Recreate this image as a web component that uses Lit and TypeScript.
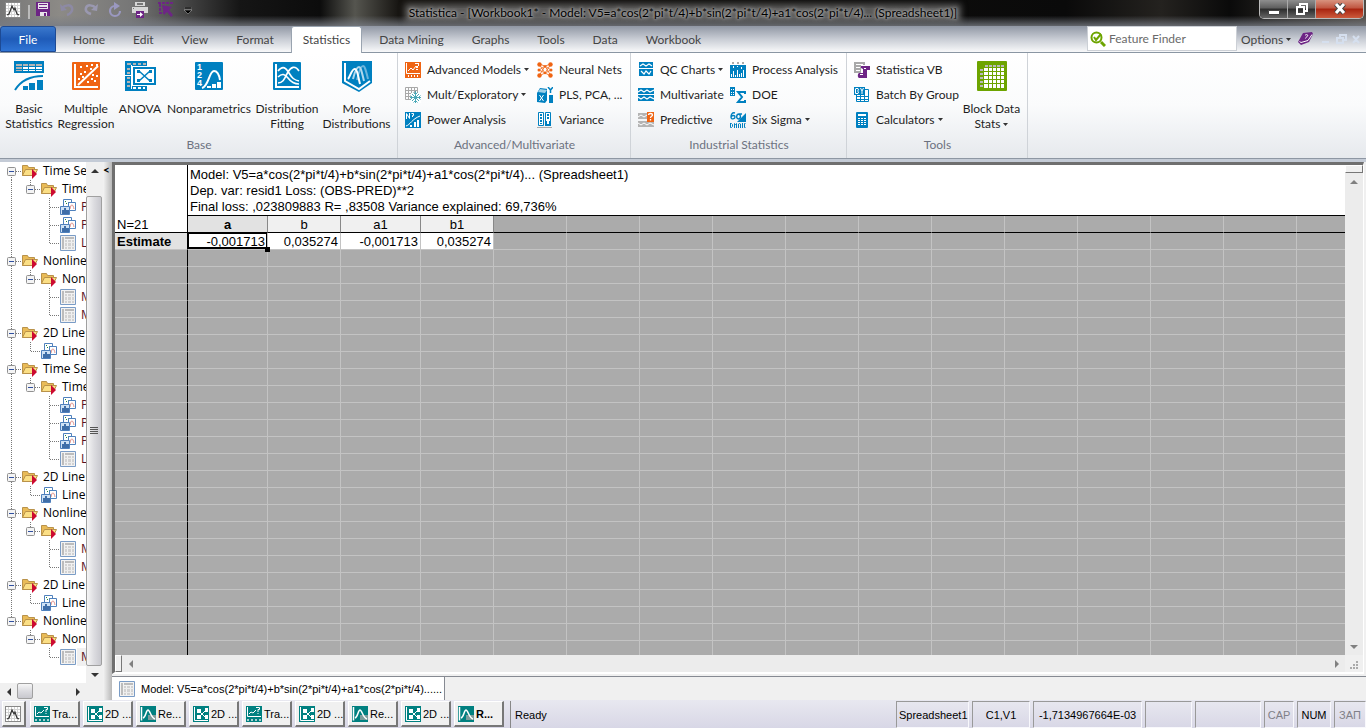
import { LitElement, html, css, svg, nothing, TemplateResult } from 'lit';
import { customElement, property } from 'lit/decorators.js';

interface TreeNode {
  label: string;
  icon: string;
  selected?: boolean;
  children?: TreeNode[];
}

const icon = (w: number, h: number, body: unknown) => html`
  <svg width=${w} height=${h} viewBox="0 0 ${w} ${h}" aria-hidden="true">${body}</svg>
`;

const BLUE = '#0080c0';
const ORANGE = '#ef6413';
const PURPLE = '#6d2585';
const TEAL = '#008080';
const GREEN = '#6da400';

const ICONS: Record<string, TemplateResult> = {
  basic: icon(30, 30, svg`
    <path fill=${BLUE} d="M0 0h30v12H0z"/>
    <path fill="#b5b5b5" d="M2 3h6v2H2zM9 3h5v2H9zM15 3h6v2h-6zM22 3h6v2h-6zM2 6h6v2H2zM2 9h6v1H2z"/>
    <path fill="#fff" d="M9 6h5v2H9zM15 6h6v2h-6zM22 6h6v2h-6zM9 9h5v1H9zM15 9h6v1h-6zM22 9h6v1h-6z"/>
    <path fill="none" stroke=${BLUE} stroke-width="2" d="M1 29C6 21 15 15 29 15"/>
    <path fill=${BLUE} d="M9 25h5v4H9zM15 22h6v7h-6zM23 19h6v10h-6z"/>`),
  regression: icon(28, 28, svg`
    <rect width="28" height="28" rx="1" fill=${ORANGE}/>
    <path fill="none" stroke="#fff" stroke-width="2" d="M3 2v23h23"/>
    <path fill="none" stroke="#fff" stroke-width="2" d="M6 23 26 4"/>
    <path fill="#fff" d="M8 4h2v2H8zM14 3h2v2h-2zM19 2h2v2h-2zM24 2h2v2h-2zM18 6h2v2h-2zM8 11h2v2H8zM12 9h2v2h-2zM6 16h2v2H6zM10 14h2v2h-2zM20 12h2v2h-2zM24 13h2v2h-2zM19 16h2v2h-2zM15 19h2v2h-2zM22 18h2v2h-2z"/>`),
  anova: icon(31, 30, svg`
    <path fill=${BLUE} d="M0 0h22v30H0z"/>
    <path fill="#b5b5b5" d="M2 2h4v2H2zM2 16h3v2H2zM2 20h3v2H2zM2 24h3v2H2zM2 7h3v2H2zM2 11h3v2H2zM8 2h3v2H8zM13 2h3v2h-3zM18 2h3v2h-3z"/>
    <path fill="#fff" d="M0 14h8v1H0zM6 4h1v24H6zM8 26h3v2H8zM13 26h3v2h-3zM18 26h2v2h-2z"/>
    <path fill="#fff" d="M7 5h24v20H7z"/>
    <path fill="none" stroke=${BLUE} stroke-width="2" d="M9 7h21v16H9z"/>
    <path stroke=${BLUE} stroke-width="1.5" d="m14 10 11 10M25 10 14 20"/>
    <path fill=${BLUE} d="M12 9h3v3h-3zM24 9h3v3h-3zM12 18h3v3h-3zM24 18h3v3h-3z"/>`),
  nonparam: icon(28, 28, svg`
    <rect width="28" height="28" rx="1" fill=${BLUE}/>
    <g fill="#fff" font-family="Liberation Sans, sans-serif" font-weight="bold" font-size="9">
      <text x="2" y="8">1</text><text x="2" y="16">2</text><text x="2" y="24">4</text>
    </g>
    <path fill="none" stroke="#fff" stroke-width="2" d="M7 26c7-2 7-17 12-17 3 0 5 3 6 9"/>
    <path fill="#fff" d="M12 24h4v2h-4zM17 22h4v4h-4zM22 20h4v6h-4z"/>`),
  distribution: icon(28, 28, svg`
    <rect width="28" height="28" rx="1" fill=${BLUE}/>
    <path fill="none" stroke="#fff" stroke-width="2" d="M3 2v23h23"/>
    <path fill="none" stroke="#fff" stroke-width="1.6" d="M5 9c5-6 8-3 11 2s5 7 10 8M5 21c6 0 7-6 10-11s7-7 11-1M5 15c4-4 7-3 10 1s6 6 11 6"/>`),
  shield: icon(30, 31, svg`
    <path fill=${BLUE} d="M0 0h30v22l-13 9L0 22z"/>
    <path fill="none" stroke="#fff" stroke-width="2" d="M3 2v18l14 8 11-8"/>
    <path fill="none" stroke="#6bb5dc" stroke-width="2" d="M15 19c2-9 4-14 6-14s3 5 5 13"/>
    <path fill="none" stroke="#b0d8ed" stroke-width="2" d="M11 18c2-8 4-12 6-12s3 6 5 14"/>
    <path fill="none" stroke="#fff" stroke-width="2" d="M6 18c2-2 4-11 7-10s3 8 5 15"/>`),
  block: icon(30, 30, svg`
    <rect width="30" height="30" rx="1" fill=${GREEN}/>
    <path fill="#fff" d="M7 7h20v20H7z"/>
    <path stroke=${GREEN} d="M11.500 7v20M15.500 7v20M19.500 7v20M23.500 7v20M7 10.500h20M7 14.500h20M7 18.500h20M7 22.500h20"/>
    <path fill="#b9b9b9" d="M8 4h3v2H8zM12 4h3v2h-3zM16 4h3v2h-3zM20 4h3v2h-3zM24 4h3v2h-3zM3 8h3v2H3zM3 12h3v2H3zM3 16h3v2H3zM3 20h3v2H3zM3 24h3v2H3z"/>`),
  advanced: icon(16, 16, svg`
    <path fill=${ORANGE} d="M0 0h16v16H0z"/>
    <path fill="none" stroke="#fff" d="M1.500 1v10.500H15M3 9l3-3 2 2 3-4"/>
    <path fill="#fff" d="M10 1h4v1h-4zM13 2h1v2h-1zM11 4h2v2h-2zM11 7h2v1h-2z"/>
    <path fill="#fff" d="M3 13h1v2H3zM6 13h1v2H6zM9 13h1v2H9zM12 13h1v2h-1z"/>`),
  exploratory: icon(16, 16, svg`
    <path fill="none" stroke="#a8a8a8" d="M.5.5h12v12H.5zM.5 3.500h12M.5 6.500h12M.5 9.500h12M3.500.5v12M6.500.5v12M9.500.5v6"/>
    <path fill="#fff" d="M6 6h10v10H6z"/>
    <path fill="none" stroke="#4aa9b8" d="M10.500 4v12M5 10.500h11M7 7l7 7M14 7l-7 7M8.500 5.500l2 2 2-2M8.500 15.500l2-2 2 2M5.500 8.500l2 2-2 2M15.500 8.500l-2 2 2 2"/>`),
  power: icon(16, 16, svg`
    <path fill=${BLUE} d="M0 0h16v16H0z"/>
    <path fill="none" stroke="#fff" d="M1.500 7V1.500l3 5V1M6.500 1.500h2v2h-1V5M1 14c4-1 6-7 14-10"/>
    <path fill="#fff" d="M5 13h2v2H5zM9 10h2v5H9zM12 8h2v7h-2z"/>`),
  neural: icon(16, 16, svg`
    <path stroke=${ORANGE} stroke-width=".8" fill="none" d="m2 2 6 2 6-2M2 2l6 9 6-9M2 8l6-4 6 4M2 8l6 3 6-3M2 14l6-10 6 10M2 14l6-3 6 3"/>
    <g fill=${ORANGE}><circle cx="2.500" cy="2.500" r="2.200"/><circle cx="2" cy="8" r="1.500"/><circle cx="2.500" cy="13.500" r="2.200"/><circle cx="13.500" cy="2.500" r="2.200"/><circle cx="14" cy="8" r="1.500"/><circle cx="13.500" cy="13.500" r="2.200"/><circle cx="8" cy="4.500" r="1.200"/><circle cx="8" cy="11" r="1.200"/></g>`),
  pls: icon(16, 16, svg`
    <path fill=${BLUE} d="m0 6 3-5 8 1v10l-3 4-8-1z"/>
    <path fill="#9fd0e8" d="m1 5 2-3 7 1-2 3z"/>
    <path fill="none" stroke="#fff" d="m2.500 8 4 6M6.500 8l-4 6"/>
    <path fill="#fff" d="M10 0h2v16h-2z"/>
    <path fill="none" stroke=${BLUE} stroke-width="1.500" d="m11 0 2.500 3L16 0M13.500 3v3"/>
    <path fill=${BLUE} d="M12 8h4v8h-4z"/>`),
  variance: icon(16, 16, svg`
    <path fill="#fff" stroke=${BLUE} d="M1.500.5h5v13h-5zM8.500.5h5v13h-5z"/>
    <path fill=${BLUE} d="M3 2h2v2H3zM3 5h2v2H3zM3 8h2v2H3zM3 11h2v1H3zM10 2h2v2h-2zM10 5h2v2h-2zM8 9h6v5H8z"/>
    <path fill="#fff" d="M10 9h2v3h-2z"/>
    <path fill="#aaa" d="M0 15h15v1H0z"/>`),
  qc: icon(16, 16, svg`
    <path fill=${BLUE} d="M1 0h14v6H1zM1 7h14v7H1z"/>
    <path fill="none" stroke="#fff" stroke-width="1.200" d="m2 4 3-2 3 2 3-2 3 2M3 9l3 3 2-3 3 3 2-3"/>`),
  multivariate: icon(16, 16, svg`
    <path fill=${BLUE} d="M0 1h16v6H0zM0 8h16v6H0z"/>
    <path fill="none" stroke="#fff" stroke-width="1.200" d="m0 5 3-2 3 2 3-2 3 2 4-2M0 10l3 2 3-2 3 2 3-2 4 2"/>`),
  predictive: icon(16, 16, svg`
    <path fill="#b4b4b4" d="M0 1h9v6H0zM0 9h16v6H0z"/>
    <path fill="none" stroke="#fff" d="m0 5 3-2 3 2 3-2M0 11l3 2 3-2 3 2 3-2 4 2"/>
    <path fill=${ORANGE} d="M9 0h7v10H9z"/>
    <path fill="none" stroke="#fff" stroke-width="1.300" d="M10.500 3c0-2 4-2 4 0 0 1.500-2 1-2 3M12.500 7v1.500"/>`),
  process: icon(16, 16, svg`
    <path fill="#aaa" d="M2 0h2v2H2zM7 0h2v2H7zM12 0h2v2h-2z"/>
    <path fill=${BLUE} d="M0 3h16v13H0z"/>
    <path stroke="#fff" d="M3.500 4v2M3.500 9v6M7.500 4v1M7.500 8v7M11.500 5v2M11.500 11v4M1.500 12v3M5.500 13v2M9.500 12v3M13.500 8v7"/>`),
  doe: icon(16, 16, svg`
    <path fill=${BLUE} d="M0 0h5v9H0z"/>
    <path fill="#fff" d="M1 2h1v1H1zM3 2h1v1H3zM1 5h1v1H1zM3 5h1v1H3zM1 7h1v1H1zM3 7h1v1H3z"/>
    <path fill="none" stroke=${BLUE} stroke-width="2" d="M15 7V5H8l4 5-4 5h7v-2"/>`),
  sigma: icon(16, 16, svg`
    <path fill="none" stroke=${BLUE} stroke-width="1.400" d="M5 1C2 0 1 3 1 5c0 3 4 2 4 0S2 3 1 5M12 2H9C6 2 6 7 8.500 7S11 3 9 2"/>
    <path fill=${BLUE} d="M16 1v9H7z"/>
    <path fill="none" stroke=${BLUE} d="M.5 11v4.500h1l1-1v-2l-1-1h-1M4.500 16v-4.500l1 1 1-1V16M8.500 16v-4l1-.5 1 .5v4M12.500 11v5M15.500 11.500h-1v4h1"/>`),
  vb: icon(16, 16, svg`
    <path fill="#a9a9a9" d="M0 0h11v3H7v8H0z"/><path fill="#fff" d="M2 2h7v1H2zM2 5h4v1H2zM2 8h4v1H2z"/>
    <path fill=${PURPLE} d="M7 4h9v4h-3v8H5c-2-1-1-5 0-5h4V7L7 6z"/><path fill="#fff" d="M6 12h3v1H6zM10 6h2v1h-2z"/>`),
  batch: icon(16, 16, svg`
    <path fill="#fff" stroke=${BLUE} d="M2.500 2.500h12v12h-12zM2.500 9.500h12M2.500 12.500h12M6.500 8v7M10.500 2v13"/>
    <path fill=${BLUE} d="M0 0h11v8H0z"/>
    <path fill="none" stroke="#fff" d="M1.500 2v4.500H4L4.500 5l-1-1 1-1L4 1.500H1.500M6.500 1l1.500 3 1.500-3M8 4v3"/>`),
  calculator: icon(16, 16, svg`
    <rect x="2" width="12" height="16" rx="1" fill=${BLUE}/>
    <path fill="#fff" d="M4 2h8v2H4z"/>
    <path stroke="#fff" stroke-dasharray="2 1" d="M4 6.500h8M4 8.500h8M4 10.500h8M4 12.500h8"/>`),
  chart: icon(16, 16, svg`
    <rect x=".5" y=".5" width="15" height="15" fill="#fff" stroke="#888"/>
    <path stroke="#d4d4d4" d="M3.500 1v14M6.500 1v14M9.500 1v14M12.500 1v14M1 3.500h14M1 6.500h14M1 9.500h14M1 12.500h14"/>
    <path fill="none" stroke="#333" stroke-width="1.200" d="m2 13 2-1 3-8 2 4 1-2 2 6 2 1"/>`),
  save: icon(14, 14, svg`
    <path fill=${PURPLE} d="M0 0h14v14H0z"/><path fill="#e8e4ea" d="M2 1h10v6H2zM4 10h7v4H4z"/>
    <path fill=${PURPLE} d="M3 2h8v1H3zM3 5h8v1H3zM8 11h2v3H8z"/>`),
  undo: icon(14, 14, svg`<path fill="none" stroke="#8d8aa4" stroke-width="2.500" d="M2 6c3-3 9-4 10 0 1 3-2 6-5 7"/><path fill="#8d8aa4" d="m0 2 1 7 6-1z"/>`),
  redo: icon(14, 14, svg`<path fill="none" stroke="#9a98b0" stroke-width="2.500" d="M12 6C9 3 3 2 2 6c-1 3 2 5 5 6"/><path fill="#9a98b0" d="m14 2-1 7-6-1z"/>`),
  refresh: icon(14, 16, svg`<path fill="none" stroke="#9a98c0" stroke-width="2.200" d="M7 4a5 5 0 1 0 5 5"/><path fill="#9a98c0" d="m6 0 6 4-6 4z"/>`),
  print: icon(16, 16, svg`
    <path fill="#d6d6d6" d="M0 5h16v6H0zM3 0h10v4H3z"/><path fill="#777" d="M5 1h6v2H5zM1 6h1v1H1z"/>
    <path fill=${PURPLE} d="M4 9h8v7H4z"/><path fill="#fff" d="M5 12h3v-2l3 2.500L8 15v-2H5z"/>`),
  select: icon(16, 16, svg`
    <path fill="none" stroke=${PURPLE} stroke-width="2" stroke-dasharray="3 1" d="M0 1h16M2 2v9h4"/>
    <path fill=${PURPLE} d="m4 3 10 2-3 3 4 5-2 2-4-5-3 3z"/>`),
  search: icon(16, 16, svg`
    <circle cx="6.500" cy="6.500" r="5" fill="none" stroke=${GREEN} stroke-width="2"/>
    <path stroke=${GREEN} stroke-width="3" d="m11 11 4 4"/>
    <path fill="none" stroke=${GREEN} stroke-width="2" d="m4 6 2 3 5-6"/>`),
  book: icon(15, 14, svg`
    <path fill=${PURPLE} d="m5 1 9-1 1 2-4 8-8 3-3-3z"/>
    <path fill="none" stroke="#fff" d="m1.500 9.500 1.500 1 7-2 4-6"/>
    <path fill="none" stroke="#fff" d="M7 3.500c1-1.500 3.500-1 2.500.5S8 5 7.500 6.500"/>`),
  folder: icon(16, 16, svg`
    <path fill="#e9bb57" stroke="#b9924a" d="M.5 12.500v-10h5l1 2h6v8z"/>
    <path fill="#fbdf85" stroke="#b9924a" d="m.5 12.500 3-6h12l-3 6z"/>
    <path fill="#cc0a30" d="m10 6 5 5-5 5z"/>`),
  graph: icon(16, 16, svg`
    <path fill="#fff" stroke="#4f81bd" d="M3.500.5h8v7h-8z"/>
    <path fill="#2b8a3c" d="M5 2h1v1H5zM8 3h1v1H8zM6 4h1v1H6z"/>
    <path fill="#fff" stroke="#4f81bd" d="M8.500 3.500h7v8h-7z"/>
    <path fill="none" stroke="#e0908a" d="M10 10c1-6 3-5 4 0"/>
    <path fill="#cfe2f5" stroke="#4f81bd" d="M.5 7.500h9v8h-9z"/>
    <path fill="#3f6ea8" d="M2 11h2v4H2zM4 9h2v6H4zM6 11h3v4H6z"/>`),
  sheet: icon(16, 16, svg`
    <path fill="#f2f2f2" stroke="#7a9cc6" d="M.5.5h15v15H.5z"/>
    <path fill="#bcbcbc" d="M2 2h2v12H2zM5 2h9v2H5z"/><path fill="#d2d2d2" d="M5 5h2v9H5zM8 5h3v9H8zM12 5h2v9h-2z"/>
    <path stroke="#ececec" d="M5 7.500h10M5 11.500h10"/>`),
  winTransform: icon(16, 16, svg`
    <path fill=${TEAL} d="M0 0h16v16H0z"/>
    <path fill="none" stroke="#fff" d="M1.500 1v9.500H15M3 8l2-2 2 1 3-3M10 1.500h3.500v2h-1.500V6M12 7v1"/>
    <path fill="#a8d0d0" d="M1 13h2v2H1zM5 13h2v2H5zM9 13h2v2H9zM13 13h2v2h-2z"/>`),
  win2d: icon(16, 16, svg`
    <path fill=${TEAL} d="M0 0h16v16H0z"/>
    <path fill="none" stroke="#fff" d="M1.500 1v13.500H15M6 5l7 7M6 11l7-7"/>
    <path fill="#fff" d="M4 3h4v4H4zM4 9h4v4H4zM12 2h3v4h-3zM12 9h3v4h-3z"/>`),
  winResults: icon(16, 16, svg`
    <path fill=${TEAL} d="M0 0h16v16H0z"/><path fill="#7d9c9c" d="M8 9h8v5H8z"/>
    <path fill="none" stroke="#fff" stroke-width="1.500" d="M1.500 1v13.500M3 12c3-1 3-8 5-8s3 8 7 9"/>`),
};

const BIG_BASE = [
  ['basic', 'Basic', 'Statistics'],
  ['regression', 'Multiple', 'Regression'],
  ['anova', 'ANOVA', ''],
  ['nonparam', 'Nonparametrics', ''],
  ['distribution', 'Distribution', 'Fitting'],
  ['shield', 'More', 'Distributions'],
];

const ADVANCED: [string, string, boolean?][] = [
  ['advanced', 'Advanced Models', true], ['neural', 'Neural Nets'],
  ['exploratory', 'Mult/Exploratory', true], ['pls', 'PLS, PCA, ...'],
  ['power', 'Power Analysis'], ['variance', 'Variance'],
];

const INDUSTRIAL: [string, string, boolean?][] = [
  ['qc', 'QC Charts', true], ['process', 'Process Analysis'],
  ['multivariate', 'Multivariate'], ['doe', 'DOE'],
  ['predictive', 'Predictive'], ['sigma', 'Six Sigma', true],
];

const TOOLS: [string, string, boolean?][] = [
  ['vb', 'Statistica VB'],
  ['batch', 'Batch By Group'],
  ['calculator', 'Calculators', true],
];

const TABS = ['Home', 'Edit', 'View', 'Format', 'Statistics', 'Data Mining', 'Graphs', 'Tools', 'Data', 'Workbook'];

const leaf = (label: string, iconName: string, selected = false): TreeNode => ({ label, icon: iconName, selected });
const folder = (label: string, children: TreeNode[]): TreeNode => ({ label, icon: 'folder', children });

const TREE: TreeNode[] = [
  folder('Time Series', [folder('Time', [leaf('P', 'graph'), leaf('P', 'graph'), leaf('L', 'sheet')])]),
  folder('Nonlinear', [folder('Nonlinear', [leaf('M', 'sheet'), leaf('M', 'sheet')])]),
  folder('2D Line', [leaf('Line', 'graph')]),
  folder('Time Series', [folder('Time', [leaf('P', 'graph'), leaf('P', 'graph'), leaf('P', 'graph'), leaf('L', 'sheet')])]),
  folder('2D Line', [leaf('Line', 'graph')]),
  folder('Nonlinear', [folder('Nonlinear', [leaf('M', 'sheet'), leaf('M', 'sheet')])]),
  folder('2D Line', [leaf('Line', 'graph')]),
  folder('Nonlinear', [folder('Nonlinear', [leaf('M', 'sheet', true)])]),
];

const MODEL = 'Model: V5=a*cos(2*pi*t/4)+b*sin(2*pi*t/4)+a1*cos(2*pi*t/4)...';

const arrow = (dir: string, dim = false) => {
  const d: Record<string, string> = {
    up: 'M0 6 4 2l4 4z', down: 'M0 2h8L4 6z', left: 'M6 0v8L2 4z', right: 'M2 0v8l4-4z',
  };
  return icon(8, 8, svg`<path fill=${dim ? '#808080' : '#333'} d=${d[dir]}/>`);
};

const caret = html`<svg class="caret" width="5" height="3" viewBox="0 0 5 3" aria-hidden="true"><path fill="#333" d="M0 0h5L2.500 3z"/></svg>`;

@customElement('workbook-tree')
export class WorkbookTree extends LitElement {
  @property({ attribute: false }) nodes: TreeNode[] = [];

  static styles = css`
    :host {
      display: block;
      overflow: hidden;
      background: #fff;
      font: 12px/18px 'Open Sans', sans-serif;
      color: #000;
    }

    .row {
      display: flex;
      height: 18px;
      padding-left: 2px;
      white-space: nowrap;
    }

    .row > svg {
      flex: none;
    }

    .node {
      margin: 1px 1px 0;
    }

    .label {
      padding: 0 4px;
      color: #000;
      text-decoration: none;
    }

    .label.leaf {
      color: #5a1020;
    }

    .label.selected {
      background: #f0f0f0;
    }
  `;

  private gutter(kind: string, expander: boolean, first: boolean) {
    const top = first ? 9 : 0;
    const bottom = kind === 'last' ? 9 : 18;
    return html`<svg width="19" height="18" viewBox="0 0 19 18" aria-hidden="true">
      ${kind !== 'blank' ? svg`<path stroke="#777" stroke-dasharray="1 1" d="M9.500 ${top}V${bottom}"/>` : nothing}
      ${kind === 'mid' || kind === 'last' ? svg`<path stroke="#777" stroke-dasharray="1 1" d="M10 9.500h9"/>` : nothing}
      ${expander ? svg`<rect x="5.500" y="5.500" width="8" height="8" rx="1" fill="#f4f4f4" stroke="#919191"/><path stroke="#3050a0" d="M7 9.500h5"/>` : nothing}
    </svg>`;
  }

  private rows(nodes: TreeNode[], trail: string[]): TemplateResult[] {
    return nodes.map((node, i) => {
      const last = i === nodes.length - 1;
      const first = i === 0 && trail.length === 0;
      return html`
        <div class="row" role="treeitem">
          ${trail.map((kind) => this.gutter(kind, false, false))}
          ${this.gutter(last ? 'last' : 'mid', !!node.children, first)}
          <span class="node">${ICONS[node.icon]}</span>
          <a href="#" class="label ${node.children || node.label === 'Line' ? '' : 'leaf'} ${node.selected ? 'selected' : ''}">${node.label}</a>
        </div>
        ${node.children ? this.rows(node.children, [...trail, last ? 'blank' : 'line']) : nothing}
      `;
    });
  }

  render() {
    return html`<div role="tree">${this.rows(this.nodes, [])}</div>`;
  }
}

@customElement('result-sheet')
export class ResultSheet extends LitElement {
  static styles = css`
    :host {
      display: block;
      overflow: hidden;
      background: #ababab;
      font: 13px/16px 'Liberation Sans', Arial, sans-serif;
      color: #000;
    }

    table {
      table-layout: fixed;
      border-collapse: separate;
      border-spacing: 0;
      width: 0;
    }

    th,
    td {
      box-sizing: border-box;
      height: 17px;
      padding: 2px 2px 0;
      border-right: 1px solid #c3c3c3;
      border-bottom: 1px solid #c3c3c3;
      font-weight: normal;
      line-height: 14px;
      white-space: nowrap;
    }

    .narrow {
      width: 73px;
    }

    .wide {
      width: 80px;
    }

    .corner {
      border-right-color: #000;
      border-bottom-color: #000;
      background: #fff;
      text-align: left;
      vertical-align: bottom;
    }

    .title {
      height: 51px;
      border-bottom-color: #000;
      background: #fff;
      line-height: 16px;
      text-align: left;
      vertical-align: top;
      white-space: pre-line;
    }

    .name {
      border-right-color: #888;
      border-bottom-color: #000;
      background: #f0f0f0;
    }

    .name.current {
      background: #e2e2e2;
      font-weight: bold;
    }

    .gap {
      border-bottom-color: #000;
    }

    .case {
      border-right-color: #000;
      text-align: left;
    }

    .case.filled {
      background: #e2e2e2;
      font-weight: bold;
    }

    .value {
      background: #fff;
      text-align: right;
    }

    .value.current {
      position: relative;
      box-shadow: inset 0 0 0 1px #000, inset 0 -2px #000;
    }

    .value.current::after {
      content: '';
      position: absolute;
      right: -3px;
      bottom: -3px;
      width: 5px;
      height: 5px;
      background: #000;
    }
  `;

  render() {
    const names = ['a', 'b', 'a1', 'b1'];
    const values = ['-0,001713', '0,035274', '-0,001713', '0,035274'];
    const blanks = Array.from({ length: 16 });
    const emptyRows = Array.from({ length: 40 });
    return html`
      <table>
        <colgroup>
          <col class="narrow" /><col class="wide" /><col class="narrow" /><col class="wide" /><col class="narrow" />
          ${blanks.map(() => html`<col class="narrow" />`)}
        </colgroup>
        <thead>
          <tr>
            <th class="corner" rowspan="2">N=21</th>
            <th class="title" colspan="20">${MODEL} (Spreadsheet1)
Dep. var: resid1 Loss: (OBS-PRED)**2
Final loss: ,023809883 R= ,83508 Variance explained: 69,736%</th>
          </tr>
          <tr>
            ${names.map((n, i) => html`<th class="name ${i === 0 ? 'current' : ''}" scope="col">${n}</th>`)}
            ${blanks.map(() => html`<td class="gap"></td>`)}
          </tr>
        </thead>
        <tbody>
          <tr>
            <th class="case filled" scope="row">Estimate</th>
            ${values.map((v, i) => html`<td class="value ${i === 0 ? 'current' : ''}">${v}</td>`)}
            ${blanks.map(() => html`<td></td>`)}
          </tr>
          ${emptyRows.map(() => html`
            <tr><td class="case"></td>${names.map(() => html`<td></td>`)}${blanks.map(() => html`<td></td>`)}</tr>
          `)}
        </tbody>
      </table>
    `;
  }
}

@customElement('app-root')
export class AppRoot extends LitElement {
  static styles = css`
    :host {
      display: flex;
      flex-direction: column;
      height: 100vh;
      overflow: hidden;
      background: #f0f0f0;
      color: #1e1e1e;
      font: 12px/15px Lato, 'Open Sans', sans-serif;
    }

    * {
      box-sizing: border-box;
    }

    button {
      display: flex;
      align-items: center;
      padding: 0;
      border: 0;
      background: none;
      color: inherit;
      font: inherit;
      white-space: nowrap;
    }

    svg {
      display: block;
      flex: none;
    }

    .caret {
      display: inline-block;
      margin-left: 3px;
      vertical-align: middle;
    }

    .titlebar {
      display: grid;
      grid-template-columns: 1fr auto 1fr;
      flex: none;
      height: 26px;
      background:
        linear-gradient(180deg, transparent 60%, rgba(120, 124, 132, 0.8)),
        linear-gradient(90deg, #777 0, #8c8a86 60px, #777 130px, #4a4a4a 180px, #151515 240px, #0c0c0c 320px, #55554f 355px, #151310 400px, #0a0a0a 78%, #24221f 85%, #0a0a0a 90%, #504b45 100%);
    }

    .quick {
      display: flex;
      align-items: flex-start;
      gap: 10px;
      padding: 2px 5px;
    }

    .quick .bar {
      width: 2px;
      height: 14px;
      margin: 3px -4px 0 -3px;
      background: #bbb;
    }

    .quick .more {
      margin-top: 5px;
    }

    .caption {
      align-self: center;
      margin: 0;
      background: rgba(140, 140, 140, 0.6);
      box-shadow: 0 0 6px 4px rgba(140, 140, 140, 0.6);
      color: #000;
      font-size: 12px;
      font-weight: normal;
      line-height: 10px;
      text-shadow: 0 0 3px #ccc, 0 0 5px #bbb;
      white-space: nowrap;
    }

    .window {
      display: flex;
      justify-self: end;
      height: 19px;
      margin-right: 2px;
      border: 1px solid #bbb;
      border-top: 0;
      border-radius: 0 0 5px 5px;
      overflow: hidden;
    }

    .window button {
      justify-content: center;
      width: 28px;
      border-right: 1px solid #aaa;
      background: linear-gradient(#8e8e8e, #5d5d5d 45%, #2c2c2c 50%, #666);
    }

    .window .close {
      width: 47px;
      border: 0;
      background: linear-gradient(#d8937f, #c05540 45%, #a82410 50%, #cc5a3c);
    }

    .tabs {
      display: flex;
      flex: none;
      height: 27px;
      border-bottom: 1px solid #8a96a3;
      background: linear-gradient(#9097a4, #c8ccd4 50%, #f8f9fa);
      color: #444;
    }

    .tabs .file {
      justify-content: center;
      width: 56px;
      height: 26px;
      border: 1px solid #1d4a94;
      border-radius: 3px 3px 0 0;
      background: linear-gradient(#3a78cc, #1f5bb8 50%, #2f74d4);
      color: #fff;
    }

    .tabs nav {
      display: flex;
      padding-left: 3px;
    }

    .tabs a {
      padding: 6px 14px;
      color: inherit;
      text-decoration: none;
      white-space: nowrap;
    }

    .tabs a.active {
      height: 27px;
      margin: 0 3px;
      padding: 5px 11px;
      border: 1px solid #9aa4b0;
      border-bottom: 0;
      border-radius: 3px 3px 0 0;
      background: #fff;
    }

    .finder {
      display: flex;
      align-items: center;
      gap: 3px;
      width: 150px;
      height: 25px;
      margin-left: auto;
      padding: 0 2px;
      border: 1px solid #ccd0d6;
      background: #fff;
    }

    .finder input {
      flex: 1;
      min-width: 0;
      padding: 0;
      border: 0;
      outline: 0;
      background: none;
      font: inherit;
    }

    .finder input::placeholder {
      color: #6a6a6a;
      opacity: 1;
    }

    .options {
      display: flex;
      align-items: center;
      gap: 7px;
      width: 129px;
      padding-left: 4px;
    }

    .ribbon {
      display: flex;
      flex: none;
      height: 106px;
      border-bottom: 1px solid #8e97a3;
      background: linear-gradient(#fff, #fafbfc 50%, #e6e9ed);
    }

    .group {
      display: flex;
      flex-direction: column;
      justify-content: space-between;
      padding: 4px 6px 5px 7px;
      border-right: 1px solid #cfd3d8;
    }

    .group h2 {
      margin: 0;
      color: #6c7280;
      font-size: 12px;
      font-weight: normal;
      line-height: 16px;
      text-align: center;
    }

    .bigs {
      display: grid;
      grid-template-columns: 58px 56px 52px 86px 70px 69px;
      margin-left: -7px;
    }

    .big {
      flex-direction: column;
      padding-top: 3px;
      text-align: center;
    }

    .big .pic {
      display: flex;
      align-items: center;
      height: 32px;
      margin-bottom: 9px;
    }

    .big .text {
      height: 30px;
    }

    .pairs {
      display: grid;
      grid-auto-rows: 25px;
    }

    .advanced {
      grid-template-columns: 132px 87px;
    }

    .industrial {
      grid-template-columns: 92px 110px;
    }

    .tools {
      display: grid;
      grid-template-columns: 108px 59px;
    }

    .small svg:first-child {
      margin-right: 6px;
    }

    .body {
      display: flex;
      flex: 1;
      min-height: 0;
      border-top: 3px solid #c4cbd6;
    }

    .side {
      display: grid;
      grid-template-columns: 86px 17px;
      grid-template-rows: minmax(0, 1fr) 17px;
      flex: none;
    }

    .track {
      display: flex;
      background: #f0f0f0;
    }

    .track.v {
      flex-direction: column;
    }

    .track button {
      justify-content: center;
      flex: none;
      width: 17px;
      height: 17px;
    }

    .track .thumb {
      display: flex;
      align-items: center;
      justify-content: center;
      border: 1px solid #a0a0a0;
      border-radius: 2px;
      background: linear-gradient(90deg, #f6f6f6, #dcdce0 50%, #c8c8ce);
    }

    .track.v .thumb {
      flex: 1;
      width: 16px;
      margin-top: 17px;
    }

    .track.h .thumb {
      width: 16px;
      height: 16px;
      background: linear-gradient(#f6f6f6, #dcdce0 50%, #c8c8ce);
    }

    .track .room {
      flex: 1;
    }

    .splitter {
      flex: none;
      align-items: flex-start;
      width: 9px;
      background: linear-gradient(90deg, #f4f4f4, #b8b8b8);
      color: #000;
      font-weight: bold;
      font-size: 12px;
    }

    .doc {
      display: flex;
      flex-direction: column;
      flex: 1;
      min-width: 0;
    }

    .pane {
      display: grid;
      grid-template-columns: minmax(0, 1fr) 18px;
      grid-template-rows: minmax(0, 1fr) 17px;
      flex: 1;
      min-height: 0;
      margin: 0 2px 2px 0;
      border: 3px solid #6f6f6f;
      border-right: 1px solid #fff;
      border-bottom: 2px solid #fff;
    }

    .pane .track {
      background: #ececec;
    }

    .grip {
      border: 1px solid #777;
      border-top-color: #fff;
      border-left-color: #fff;
      background: #f0f0f0;
    }

    .track.v .grip {
      height: 8px;
    }

    .track.h .grip {
      width: 7px;
    }

    .corner {
      padding: 6px 4px;
      background: #f0f0f0;
    }

    .sheets {
      display: flex;
      flex: none;
      height: 24px;
      border-top: 1px solid #868a92;
      font: 11px/16px 'Liberation Sans', Arial, sans-serif;
      color: #000;
    }

    .sheets button {
      gap: 6px;
      padding: 0 2px 0 7px;
      border-right: 1px solid #868a92;
      background: #fff;
    }

    .status {
      display: flex;
      flex: none;
      gap: 3px;
      height: 28px;
      padding: 1px 0 0 2px;
      background: linear-gradient(#e8e8f0, #d8d7e6);
      color: #000;
      font: 11px/16px 'Liberation Sans', Arial, sans-serif;
    }

    .status button {
      gap: 2px;
      width: 50px;
      height: 26px;
      padding-left: 3px;
      border: 1px solid #fff;
      border-right: 2px solid #777;
      border-bottom: 2px solid #777;
      background: #f0f0f0;
    }

    .status .menu {
      width: 24px;
      margin-right: 1px;
      padding-left: 2px;
    }

    .status .bold {
      font-weight: bold;
    }

    .status .ready {
      flex: 1;
      margin-left: 3px;
      padding: 6px 4px;
      border-left: 1px solid #888;
    }

    .status .cell {
      padding: 5px 2px;
      border: 1px solid #f8f8fc;
      border-top-color: #999;
      border-left-color: #999;
      text-align: center;
      white-space: nowrap;
    }

    .status .off {
      color: #808088;
    }
  `;

  private small([name, label, menu]: [string, string, boolean?]) {
    return html`<button class="small">${ICONS[name]}${label}${menu ? caret : nothing}</button>`;
  }

  private renderRibbon() {
    return html`
      <section class="ribbon">
        <div class="group">
          <div class="bigs">
            ${BIG_BASE.map(([name, first, second]) => html`
              <button class="big"><span class="pic">${ICONS[name]}</span><span class="text">${first}<br />${second}</span></button>
            `)}
          </div>
          <h2>Base</h2>
        </div>
        <div class="group">
          <div class="pairs advanced">${ADVANCED.map((item) => this.small(item))}</div>
          <h2>Advanced/Multivariate</h2>
        </div>
        <div class="group">
          <div class="pairs industrial">${INDUSTRIAL.map((item) => this.small(item))}</div>
          <h2>Industrial Statistics</h2>
        </div>
        <div class="group">
          <div class="tools">
            <div class="pairs">${TOOLS.map((item) => this.small(item))}</div>
            <button class="big"><span class="pic">${ICONS.block}</span><span class="text">Block Data<br />Stats${caret}</span></button>
          </div>
          <h2>Tools</h2>
        </div>
      </section>
    `;
  }

  private renderStatus() {
    const windows = [
      ['winTransform', 'Tra...'], ['win2d', '2D ...'], ['winResults', 'Re...'], ['win2d', '2D ...'],
      ['winTransform', 'Tra...'], ['win2d', '2D ...'], ['winResults', 'Re...'], ['win2d', '2D ...'], ['winResults', 'R...'],
    ];
    const cells: [string, number, boolean?][] = [
      ['Spreadsheet1', 73], ['C1,V1', 58], ['-1,7134967664E-03', 109], ['', 47], ['', 66],
      ['CAP', 30, true], ['NUM', 34], ['ЗАП', 32, true],
    ];
    return html`
      <footer class="status">
        <button class="menu" aria-label="Windows">${ICONS.chart}</button>
        ${windows.map(([name, label], i) => html`
          <button class=${i === windows.length - 1 ? 'bold' : ''}>${ICONS[name]}${label}</button>
        `)}
        <span class="ready">Ready</span>
        ${cells.map(([label, width, off]) => html`
          <span class="cell ${off ? 'off' : ''}" style="width:${width}px">${label}</span>
        `)}
      </footer>
    `;
  }

  render() {
    return html`
      <header class="titlebar">
        <div class="quick">
          ${ICONS.chart}<span class="bar"></span>
          ${['save', 'undo', 'redo', 'refresh', 'print', 'select'].map((name) => html`<button aria-label=${name}>${ICONS[name]}</button>`)}
          <button class="more" aria-label="customize">${icon(8, 8, svg`<path fill="#000" stroke="#bbb" stroke-width=".5" d="M0 0h8v2H0zM0 3h8L4 7z"/>`)}</button>
        </div>
        <h1 class="caption">Statistica - [Workbook1* - ${MODEL} (Spreadsheet1)]</h1>
        <div class="window">
          <button aria-label="Minimize">${icon(12, 12, svg`<path fill="#fff" stroke="#444" d="M.5 7.500h11v4H.5z"/>`)}</button>
          <button aria-label="Restore">${icon(12, 12, svg`<path fill="none" stroke="#fff" stroke-width="2" d="M4 3V1h7v7H9M1 4h7v7H1z"/>`)}</button>
          <button class="close" aria-label="Close">${icon(12, 12, svg`<path stroke="#444" stroke-width="5" d="m2 1 8 9M10 1l-8 9"/><path stroke="#fff" stroke-width="3" d="m2 1 8 9M10 1l-8 9"/>`)}</button>
        </div>
      </header>
      <div class="tabs">
        <button class="file">File</button>
        <nav>${TABS.map((tab) => html`<a href="#" class=${tab === 'Statistics' ? 'active' : ''}>${tab}</a>`)}</nav>
        <label class="finder">${ICONS.search}<input type="text" placeholder="Feature Finder" aria-label="Feature Finder" /></label>
        <div class="options">
          <button>Options${caret}</button>
          <button aria-label="Help">${ICONS.book}</button>
          ${icon(40, 10, svg`<path fill="none" stroke="#d5dfee" stroke-width="2" d="M2 8h7M20 3V1h6v5h-2M17 4h6v5h-6zM33 2l6 7M39 2l-6 7"/>`)}
        </div>
      </div>
      ${this.renderRibbon()}
      <main class="body">
        <aside class="side">
          <workbook-tree .nodes=${TREE}></workbook-tree>
          <div class="track v">
            <button aria-label="Up">${arrow('up')}</button>
            <span class="thumb">${icon(8, 8, svg`<path stroke="#555" d="M0 .5h8M0 2.500h8M0 4.500h8M0 6.500h8"/>`)}</span>
            <button aria-label="Down">${arrow('down')}</button>
          </div>
          <div class="track h">
            <button aria-label="Left">${arrow('left')}</button>
            <span class="thumb"></span><span class="room"></span>
            <button aria-label="Right">${arrow('right')}</button>
          </div>
          <span></span>
        </aside>
        <button class="splitter" aria-label="Collapse tree">&lt;</button>
        <section class="doc">
          <div class="pane">
            <result-sheet></result-sheet>
            <div class="track v">
              <span class="grip"></span>
              <button aria-label="Up">${arrow('up', true)}</button>
              <span class="room"></span>
              <button aria-label="Down">${arrow('down', true)}</button>
            </div>
            <div class="track h">
              <span class="grip"></span>
              <button aria-label="Left">${arrow('left', true)}</button>
              <span class="room"></span>
              <button aria-label="Right">${arrow('right', true)}</button>
            </div>
            <span class="corner">${icon(9, 9, svg`<path fill="#aaa" d="M7 0h2v2H7zM7 3h2v2H7zM4 3h2v2H4zM7 6h2v2H7zM4 6h2v2H4zM1 6h2v2H1z"/>`)}</span>
          </div>
          <div class="sheets"><button>${ICONS.sheet}${MODEL}...</button></div>
        </section>
      </main>
      ${this.renderStatus()}
    `;
  }
}

declare global {
  interface HTMLElementTagNameMap {
    'app-root': AppRoot;
    'workbook-tree': WorkbookTree;
    'result-sheet': ResultSheet;
  }
}
